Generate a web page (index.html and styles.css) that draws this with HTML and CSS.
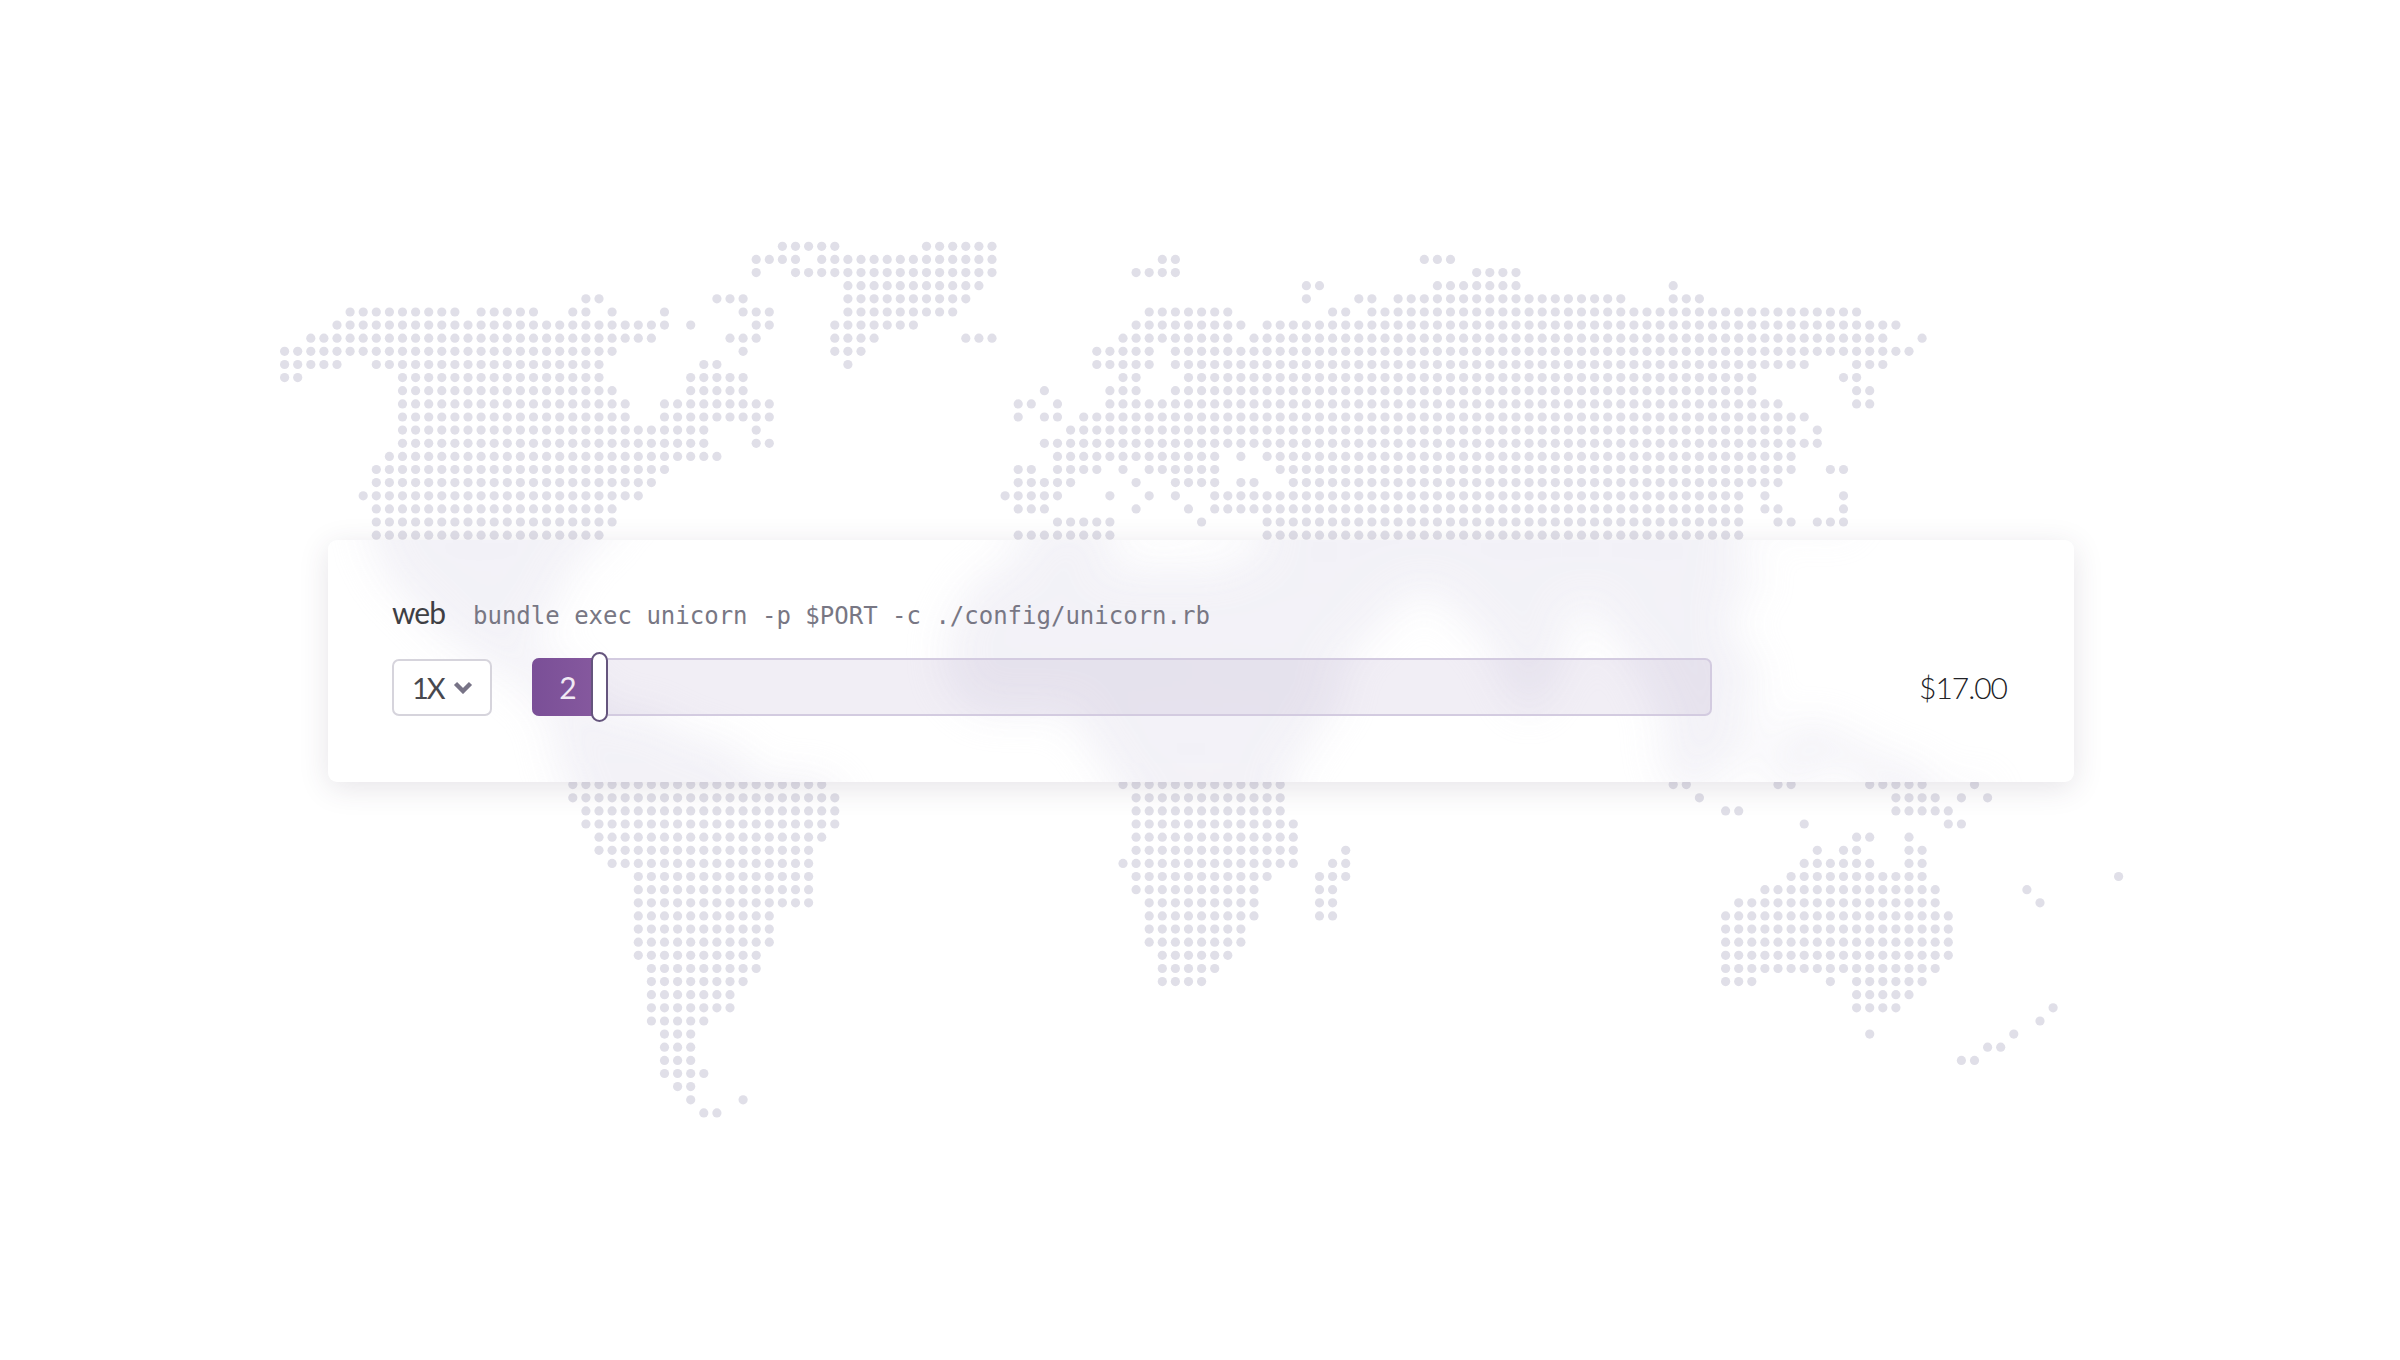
FILE: index.html
```html
<!DOCTYPE html>
<html lang="en">
<head>
  <meta charset="UTF-8" />
  <title>Dyno formation</title>
  <link rel="stylesheet" href="styles.css">
</head>
<body>

<svg class="world-map" width="2400" height="1360" viewBox="0 0 2400 1360"></svg>

<div class="stage">
  <div class="process-card">
    <div class="card-backdrop">
      <svg class="world-map world-map-blurred" width="2400" height="1360" viewBox="0 0 2400 1360"></svg>
    </div>

    <div class="process-line">
      <span class="process-name">web</span>
      <code class="process-command">bundle exec unicorn -p $PORT -c ./config/unicorn.rb</code>
    </div>

    <div class="process-controls">
      <div class="size-select">
        <span class="size-label">1X</span>
        <svg class="chevron" width="20" height="13" viewBox="0 0 20 13">
          <path d="M2.5 2.5 L10 10 L17.5 2.5" fill="none" stroke="#777386" stroke-width="4.4"/>
        </svg>
      </div>

      <div class="scale-slider">
        <div class="scale-fill">2</div>
        <div class="scale-thumb"></div>
      </div>

      <div class="process-price">$17.00</div>
    </div>
  </div>
</div>

<script src="map.js"></script>

</body>
</html>
```

FILE: styles.css
```css
body {
  margin: 0;
  padding: 0;
  background-color: #ffffff;
  font-family: 'Lato', 'Open Sans', sans-serif;
  height: 100vh;
  overflow: hidden;
}

.world-map {
  position: absolute;
  top: 0;
  left: 0;
}

.world-map circle {
  fill: #e0dfe8;
}

.stage {
  position: relative;
  padding: 540px 326px 0 328px;
}

.process-card {
  position: relative;
  height: 242px;
  box-sizing: border-box;
  padding: 54px 67px 0 64px;
  background: #ffffff;
  border-radius: 9px;
  box-shadow: 0 6px 30px rgba(60, 50, 80, 0.13);
}

/* same map again, blurred, so it shows through the card */
.card-backdrop {
  position: absolute;
  top: 0;
  left: 0;
  width: 100%;
  height: 100%;
  overflow: hidden;
  border-radius: 9px;
}

.world-map-blurred {
  top: -540px;
  left: -328px;
  filter: blur(21px);
  opacity: 0.88;
}

.world-map-blurred circle {
  fill: #dbd8e8;
}

.process-line {
  position: relative;
  display: flex;
  align-items: baseline;
  height: 48px;
}

.process-name {
  font-size: 30px;
  letter-spacing: -1px;
  color: #3f3f44;
}

.process-command {
  margin-left: 28px;
  font-family: 'DejaVu Sans Mono', monospace;
  font-size: 24px;
  color: #787784;
}

.process-controls {
  position: relative;
  display: flex;
  align-items: center;
  margin-top: 16px;
}

.size-select {
  display: flex;
  align-items: center;
  justify-content: space-between;
  box-sizing: border-box;
  width: 100px;
  height: 57px;
  padding: 0 17px 0 18px;
  background: #ffffff;
  border: 2px solid #d6d4dc;
  border-radius: 7px;
  font-size: 29px;
  color: #48484e;
}

.size-label {
  letter-spacing: -2px;
}

.scale-slider {
  position: relative;
  box-sizing: border-box;
  display: flex;
  width: 1180px;
  height: 58px;
  margin-left: 40px;
  background: rgba(121, 88, 159, 0.1);
  border: 2px solid #d3cbe0;
  border-radius: 7px;
}

.scale-fill {
  display: flex;
  align-items: center;
  justify-content: center;
  width: 72px;
  margin: -2px 0 -2px -2px;
  background: linear-gradient(90deg, #7a4f97, #875a9f);
  border-radius: 7px 0 0 7px;
  font-size: 30px;
  color: #f0e9f4;
}

.scale-thumb {
  position: absolute;
  top: -8px;
  left: 57px;
  box-sizing: border-box;
  width: 17px;
  height: 70px;
  background: #ffffff;
  border: 2px solid #65557d;
  border-radius: 9px;
}

.process-price {
  flex: 1;
  text-align: right;
  font-size: 30px;
  font-weight: 300;
  letter-spacing: -1px;
  color: #222226;
}
```

FILE: map.js
```js
// dot map rows: [row, startCol, endCol, startCol, endCol, ...]
const rows = [
  [0, 38,42, 49,54],
  [1, 36,39, 41,54, 67,68, 87,89],
  [2, 36,36, 39,54, 65,68, 91,94],
  [3, 43,53, 78,79, 88,94, 106,106],
  [4, 23,24, 33,35, 43,52, 78,78, 82,83, 85,102, 106,108],
  [5, 5,13, 15,19, 22,23, 25,25, 29,29, 35,37, 43,51, 66,72, 80,81, 83,120],
  [6, 4,29, 31,31, 36,37, 42,48, 65,73, 75,123],
  [7, 2,28, 34,36, 42,45, 52,54, 64,72, 74,122, 125,125],
  [8, 0,25, 35,35, 42,44, 62,66, 68,124],
  [9, 0,4, 7,24, 32,33, 43,43, 62,66, 68,116, 120,122],
  [10, 0,1, 9,24, 31,35, 64,65, 69,112, 119,120],
  [11, 9,25, 31,35, 58,58, 63,65, 68,112, 120,121],
  [12, 9,26, 29,37, 56,57, 59,59, 63,114, 120,121],
  [13, 9,26, 29,37, 56,56, 58,59, 61,116],
  [14, 9,32, 36,36, 60,115, 117,117],
  [15, 9,32, 36,37, 58,117],
  [16, 8,33, 59,71, 73,73, 75,115],
  [17, 7,29, 56,57, 59,62, 64,64, 66,71, 76,115, 118,119],
  [18, 7,28, 56,60, 65,65, 68,71, 73,74, 77,114],
  [19, 6,27, 55,59, 63,63, 66,66, 68,68, 71,111, 113,113, 119,119],
  [20, 7,25, 56,58, 65,65, 69,69, 71,111, 113,114, 119,119],
  [21, 7,25, 59,63, 70,70, 75,111, 114,115, 117,119],
  [22, 7,24, 56,63, 75,111],
  // rows under the card, only seen through the blur
  [23, 7,23, 57,63, 75,111],
  [24, 8,22, 56,62, 73,110],
  [25, 8,21, 54,112],
  [26, 9,21, 53,112],
  [27, 10,20, 52,85, 89,110],
  [28, 11,20, 52,84, 90,98, 101,110],
  [29, 12,19, 51,83, 91,97, 101,110],
  [30, 13,18, 51,82, 92,98, 102,110],
  [31, 15,19, 51,81, 93,97, 103,111],
  [32, 16,21, 51,80, 93,97, 104,112],
  [33, 18,22, 51,80, 94,96, 104,112],
  [34, 19,23, 52,80, 94,96, 105,112],
  [35, 20,24, 53,80, 95,95, 105,110],
  [36, 21,28, 61,79, 106,112],
  [37, 21,30, 61,78, 106,112, 115,118],
  [38, 21,33, 62,78, 105,110, 114,120],
  [39, 21,35, 63,77, 106,112, 115,122],
  [40, 22,35, 63,76, 106,109, 114,116, 120,125],
  // below the card
  [41, 22,41, 64,76, 106,107, 114,115, 121,125, 129,129],
  [42, 22,42, 65,76, 108,108, 123,126, 128,128, 130,130],
  [43, 23,42, 65,76, 110,111, 123,127],
  [44, 23,42, 65,77, 116,116, 127,128],
  [45, 24,41, 65,77, 120,121, 124,124],
  [46, 24,40, 65,77, 81,81, 117,117, 119,120, 124,125],
  [47, 25,40, 64,77, 80,81, 116,121, 124,125],
  [48, 27,40, 65,75, 79,81, 115,125, 140,140],
  [49, 27,40, 65,74, 79,80, 113,126, 133,133],
  [50, 27,40, 66,74, 79,80, 111,126, 134,134],
  [51, 27,37, 66,74, 79,80, 110,127],
  [52, 27,37, 66,73, 110,127],
  [53, 27,37, 66,73, 110,127],
  [54, 27,36, 67,72, 110,127],
  [55, 28,36, 67,71, 110,126],
  [56, 28,35, 67,70, 110,112, 118,118, 120,125],
  [57, 28,34, 120,124],
  [58, 28,34, 120,123, 135,135],
  [59, 28,32, 134,134],
  [60, 29,31, 121,121, 132,132],
  [61, 29,31, 130,131],
  [62, 29,31, 128,129],
  [63, 29,32],
  [64, 30,31],
  [65, 31,31, 35,35],
  [66, 32,33]
];

let dots = '';

rows.forEach(function (row) {
  const y = 246.3 + row[0] * 13.13;
  for (let i = 1; i < row.length; i += 2) {
    for (let c = row[i]; c <= row[i + 1]; c++) {
      dots += '<circle cx="' + (284.6 + c * 13.1).toFixed(1) + '" cy="' + y.toFixed(1) + '" r="4.6"/>';
    }
  }
});

document.querySelectorAll('.world-map').forEach(function (map) {
  map.innerHTML = dots;
});
```
